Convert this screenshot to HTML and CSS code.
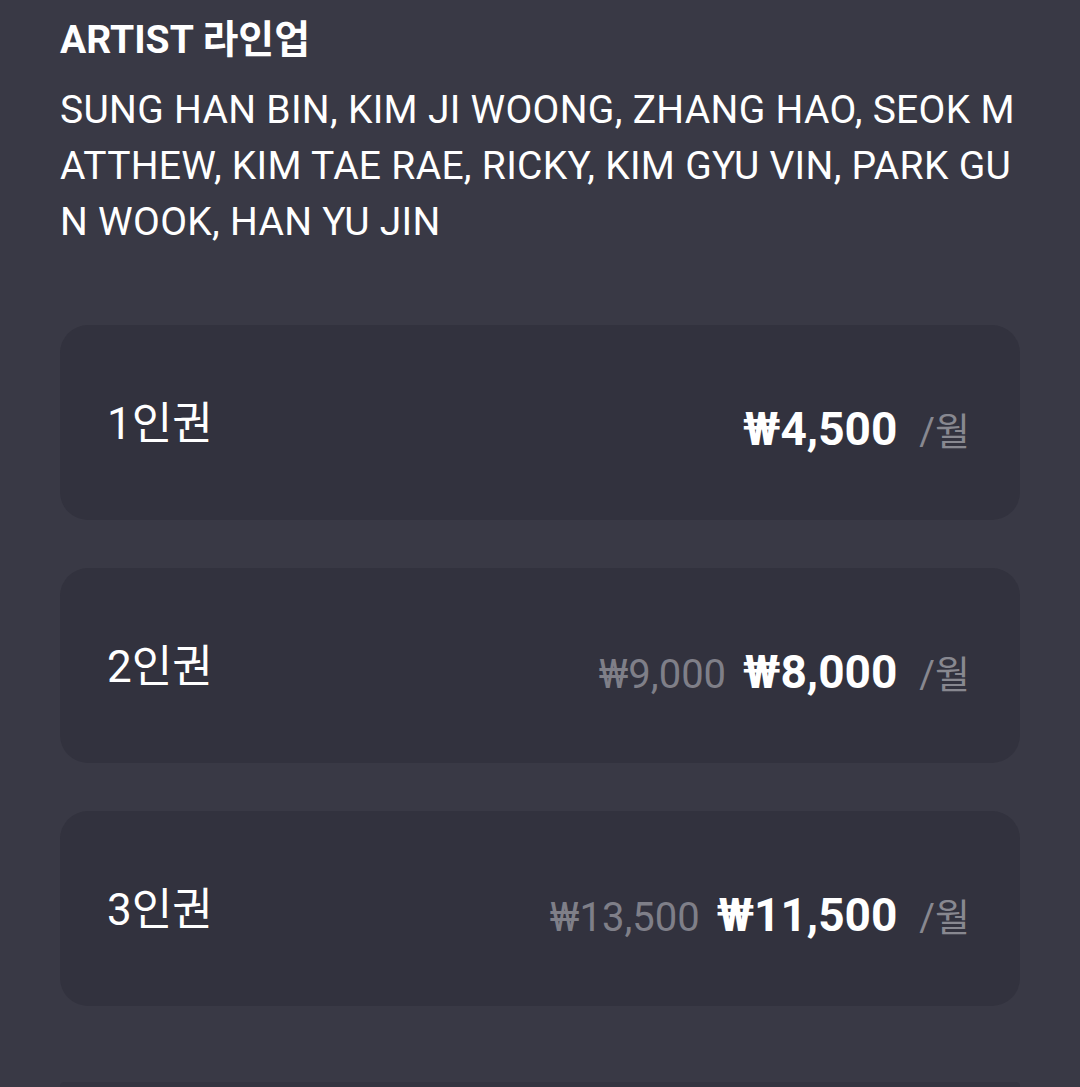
FILE: index.html
```html
<!DOCTYPE html>
<html lang="ko">
  <head>
    <meta charset="UTF-8" />
    <meta name="viewport" content="width=device-width, initial-scale=1.0" />
    <title>ARTIST 라인업</title>
    <link rel="stylesheet" href="styles.css">
  </head>
  <body>
    <div class="page">
      <h2 class="title">ARTIST 라인업</h2>
      <p class="lineup">
        SUNG HAN BIN, KIM JI WOONG, ZHANG HAO, SEOK MATTHEW, KIM TAE RAE, RICKY, KIM GYU VIN, PARK GUN WOOK, HAN YU JIN
      </p>

      <div class="plans">
        <div class="plan">
          <span class="plan-name">1인권</span>
          <div class="price">
            <span class="now">₩4,500</span>
            <span class="unit">/월</span>
          </div>
        </div>
        <div class="plan">
          <span class="plan-name">2인권</span>
          <div class="price">
            <span class="was">₩9,000</span>
            <span class="now">₩8,000</span>
            <span class="unit">/월</span>
          </div>
        </div>
        <div class="plan">
          <span class="plan-name">3인권</span>
          <div class="price">
            <span class="was">₩13,500</span>
            <span class="now">₩11,500</span>
            <span class="unit">/월</span>
          </div>
        </div>
      </div>
      <div class="next-box"></div>
    </div>
  </body>
</html>
```

FILE: styles.css
```css
* {
  margin: 0;
  padding: 0;
  box-sizing: border-box;
}
body,
html {
  width: 100%;
  height: 100%;
  overflow: hidden;
  background: #393945;
  font-family: Roboto, "Noto Sans CJK KR", sans-serif;
  color: #ffffff;
}
.page {
  padding: 14px 60px 0 60px;
}
.title {
  font-size: 39px;
  font-weight: 700;
  line-height: 52px;
}
.lineup {
  margin-top: 16px;
  font-size: 39px;
  letter-spacing: 0.3px;
  line-height: 56px;
  word-break: break-all;
}
.plans {
  display: flex;
  flex-direction: column;
  gap: 48px;
  margin-top: 75px;
}
.plan {
  display: flex;
  align-items: center;
  justify-content: space-between;
  height: 195px;
  padding: 0 50px 0 47px;
  background: #32323e;
  border-radius: 28px;
}
.plan-name {
  font-size: 44px;
  margin-top: -6px;
}
.price {
  display: flex;
  align-items: baseline;
  margin-top: 12px;
}
.now {
  font-size: 46px;
  font-weight: 700;
}
.was {
  font-size: 40px;
  color: #7f7f88;
  margin-right: 17px;
}
.unit {
  font-size: 38px;
  color: #888890;
  margin-left: 22px;
}
.next-box {
  height: 100px;
  margin-top: 76px;
  background: #343440;
  border-radius: 4px;
}
```
